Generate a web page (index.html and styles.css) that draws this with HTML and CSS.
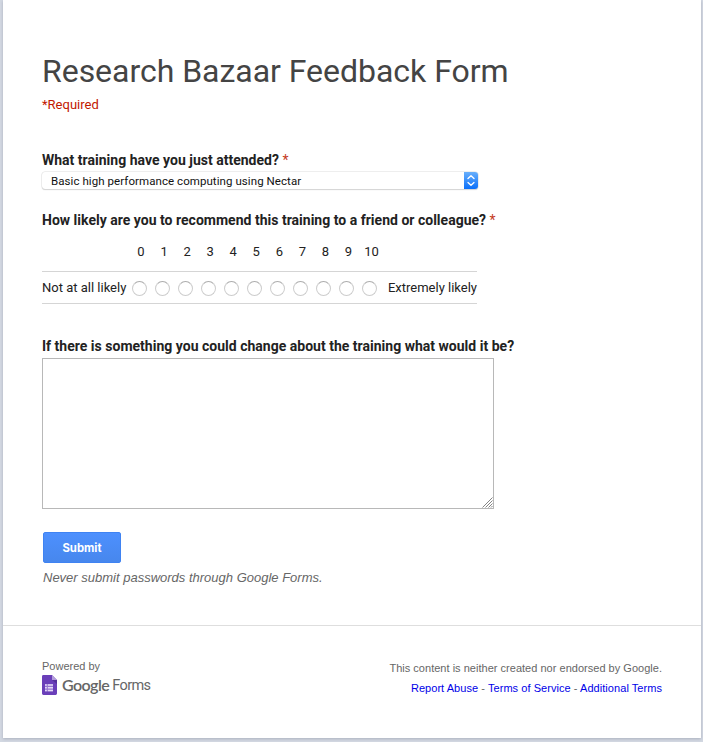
FILE: index.html
```html
<!DOCTYPE html>
<html lang="en">
<head>
<meta charset="utf-8">
<title>Research Bazaar Feedback Form</title>
<link rel="stylesheet" href="styles.css">
</head>
<body>
<main class="card">
  <form class="form">
    <h1 class="title">Research Bazaar Feedback Form</h1>
    <div class="required">*Required</div>

    <div class="question q-training">What training have you just attended? <span class="star">*</span></div>
    <div class="select">
      <span class="select-value">Basic high performance computing using Nectar</span>
      <span class="select-button">
        <svg width="14" height="17" viewBox="0 0 14 17"><path d="M4 6.500 7 3.800l3 2.700M4 10.600l3 2.700 3-2.700" fill="none" stroke="#fff" stroke-width="1.4" stroke-linecap="round" stroke-linejoin="round"/></svg>
      </span>
    </div>

    <div class="question q-likely">How likely are you to recommend this training to a friend or colleague? <span class="star">*</span></div>
    <div class="scale scale-head">
      <span></span><span>0</span><span>1</span><span>2</span><span>3</span><span>4</span><span>5</span><span>6</span><span>7</span><span>8</span><span>9</span><span>10</span><span></span>
    </div>
    <div class="scale scale-row">
      <span class="low">Not at all likely</span>
      <i class="radio"></i><i class="radio"></i><i class="radio"></i><i class="radio"></i><i class="radio"></i><i class="radio"></i><i class="radio"></i><i class="radio"></i><i class="radio"></i><i class="radio"></i><i class="radio"></i>
      <span class="high">Extremely likely</span>
    </div>

    <div class="question q-change">If there is something you could change about the training what would it be?</div>
    <div class="textarea">
      <svg width="12" height="12" viewBox="0 0 12 12"><path d="M1.500 11.500 11.500 1.500M4.500 11.500l7-7M7.500 11.500l4-4M10 11.500l1.500-1.500" stroke="#858585" stroke-width="1"/></svg>
    </div>

    <button class="submit" type="button">Submit</button>
    <div class="note">Never submit passwords through Google Forms.</div>
  </form>

  <footer class="footer">
    <div class="powered">
      <div class="powered-by">Powered by</div>
      <div class="logo">
        <svg class="logo-icon" width="15" height="20" viewBox="0 0 15 20">
          <path d="M1.4 0H10l5 5v13.6a1.4 1.4 0 0 1-1.4 1.4H1.4A1.4 1.4 0 0 1 0 18.600V1.400A1.400 1.400 0 0 1 1.400 0Z" fill="#6a3fb9"/>
          <path d="M10 0l5 5h-5Z" fill="#b39ddb"/>
          <path d="M10 5h5v4Z" fill="#54309c"/>
          <path d="M3 9h8v7.500H3Z" fill="#9474d0"/>
          <path d="M3 10h1.800M5.800 10H11M3 12.700h1.800M5.800 12.700H11M3 15.400h1.800M5.800 15.400H11" stroke="#e4d9f6" stroke-width="1.500"/>
        </svg>
        <span class="logo-google">Google</span><span class="logo-forms">Forms</span>
      </div>
    </div>
    <div class="legal">
      <div>This content is neither created nor endorsed by Google.</div>
      <div class="links"><a href="#">Report Abuse</a> - <a href="#">Terms of Service</a> - <a href="#">Additional Terms</a></div>
    </div>
  </footer>
</main>
</body>
</html>
```

FILE: styles.css
```css
* { box-sizing: border-box; }
body {
  margin: 0;
  height: 742px;
  overflow: hidden;
  background: #d3d8e2;
  font-family: Roboto, sans-serif;
  color: #222;
}
.card {
  width: 698px;
  height: 738px;
  margin-left: 3px;
  background: #fff;
  box-shadow: 0 1px 3px #aab0bd;
}
.form {
  display: flex;
  flex-direction: column;
  align-items: flex-start;
  height: 626px;
  padding: 51px 39px 0;
  border-bottom: 1px solid #dedede;
}
.title {
  margin: 0;
  font-size: 32px;
  font-weight: 400;
  line-height: 40px;
  letter-spacing: -.03px;
  color: #444;
  white-space: nowrap;
}
.required {
  margin-top: 4px;
  font-size: 13px;
  line-height: 20px;
  color: #c21700;
}
.question {
  font-size: 14px;
  font-weight: 700;
  line-height: 20px;
  letter-spacing: .012px;
  white-space: nowrap;
}
.q-training { margin-top: 35px; }
.q-likely { margin-top: 21px; }
.q-change { margin-top: 32px; }
.star { font-weight: 400; color: #c43b1d; }
.select {
  display: flex;
  align-items: center;
  justify-content: space-between;
  width: 436px;
  height: 17px;
  margin-top: 2px;
  padding-left: 9px;
  border-radius: 3px;
  box-shadow: 0 0 0 .5px #ddd, 0 1px 1px #ccc;
  font-size: 11.5px;
  line-height: 17px;
  letter-spacing: .07px;
  color: #111;
}
.select-value { padding-top: 1px; }
.select-button {
  height: 17px;
  border-radius: 0 3px 3px 0;
  background: linear-gradient(#68affb, #0b70fa);
}
.select-button svg { display: block; }
.scale {
  display: grid;
  grid-template-columns: 86px repeat(11, 23.050px) 1fr;
  align-items: center;
  justify-items: center;
  width: 435px;
  font-size: 13px;
}
.scale-head { height: 41px; padding: 2px 0 0 1.500px; }
.scale-row {
  height: 33px;
  border-top: 1px solid #d5d5d5;
  border-bottom: 1px solid #d5d5d5;
}
.low { justify-self: start; white-space: nowrap; }
.high { justify-self: end; white-space: nowrap; }
.radio {
  width: 15px;
  height: 15px;
  margin-top: 2px;
  border: 1px solid #cdcdcd;
  border-top-color: #adadad;
  border-radius: 50%;
}
.textarea {
  display: flex;
  align-items: flex-end;
  justify-content: flex-end;
  width: 452px;
  height: 151px;
  margin-top: 2px;
  border: 1px solid #b8b8b8;
}
.submit {
  width: 78px;
  height: 31px;
  margin: 23px 0 0 1px;
  padding: 0;
  border: 1px solid #3f83f2;
  border-radius: 2px;
  background: linear-gradient(#4d90fe, #4787ed);
  font: 700 11.300px Inter, sans-serif;
  color: #fff;
}
.note {
  margin: 5px 0 0 1px;
  font: italic 13px/20px "Liberation Sans", sans-serif;
  color: #666;
}
.footer {
  display: flex;
  justify-content: space-between;
  padding: 32px 39px 0;
  font: 11px/20px "Liberation Sans", sans-serif;
  color: #666;
}
.powered-by { line-height: 17px; }
.logo { display: flex; align-items: center; height: 20px; }
.logo-google { margin-left: 5px; font: 600 16px/20px Lato, sans-serif; letter-spacing: -.550px; }
.logo-forms { margin-left: 3px; padding-top: 2px; font: 400 14.500px/20px Roboto, sans-serif; letter-spacing: -.600px; }
.legal { text-align: right; white-space: nowrap; letter-spacing: .02px; }
.links { letter-spacing: .053px; }
.links a { color: #0000e8; text-decoration: none; }
```
